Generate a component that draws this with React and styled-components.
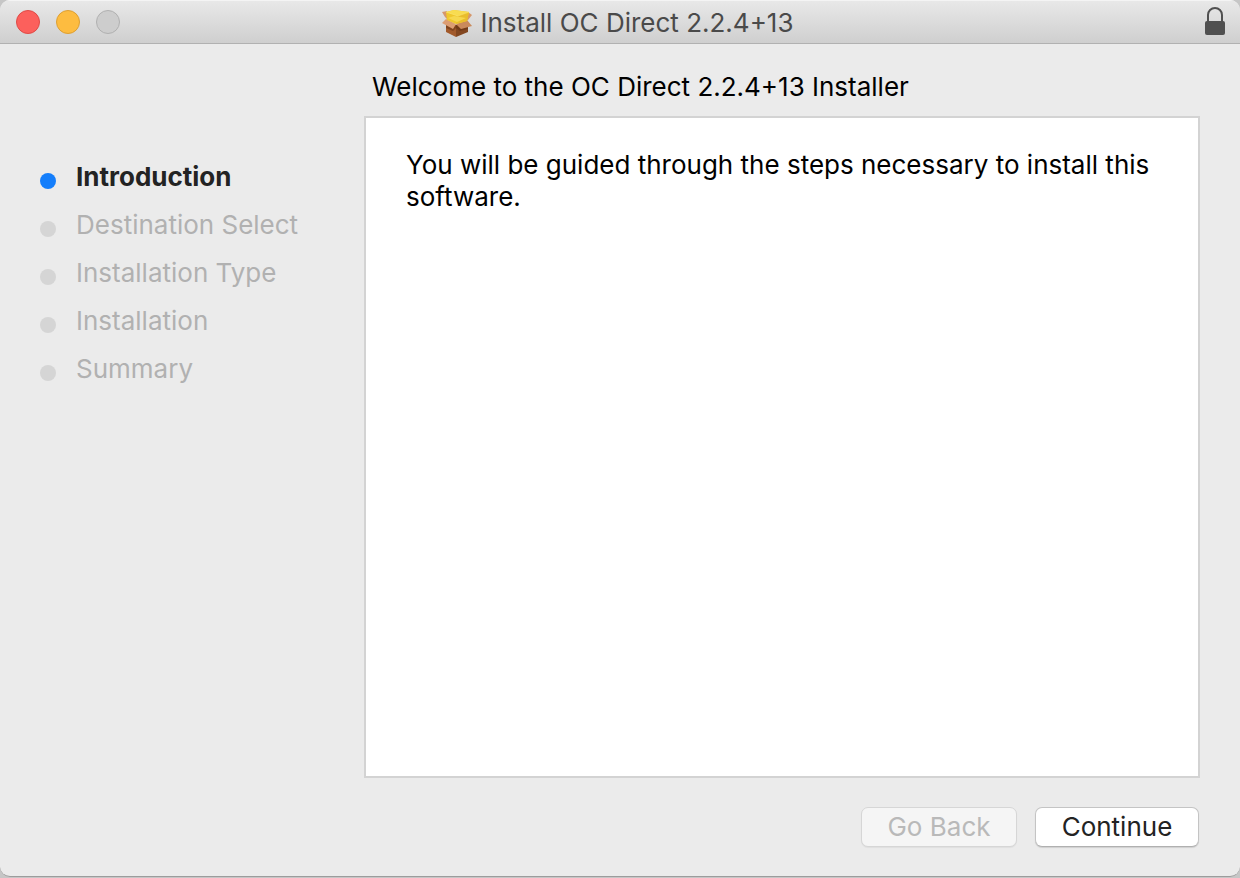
import React, { useState } from 'react';
import styled, { createGlobalStyle } from 'styled-components';

const GlobalStyle = createGlobalStyle`
  * {
    box-sizing: border-box;
  }

  body {
    margin: 0;
    background: #c6c6c6;
    font-family: Inter, 'Liberation Sans', sans-serif;
    font-size: 26px;
    line-height: 32px;
    color: #000;
  }
`;

const Window = styled.div`
  display: flex;
  flex-direction: column;
  min-height: calc(100vh - 1px);
  background: #ebebeb;
  border-bottom: 1px solid #9c9c9c;
  border-radius: 10px;
  overflow: hidden;
`;

const TitleBar = styled.header`
  display: grid;
  grid-template-columns: 1fr auto 1fr;
  align-items: center;
  height: 44px;
  padding: 0 14px 0 16px;
  background: linear-gradient(#e8e8e8, #cfcfcf);
  border-top: 1px solid #f4f4f4;
  border-bottom: 1px solid #b1b1b1;
`;

const WindowControls = styled.div`
  display: flex;
  gap: 16px;
`;

const ControlButton = styled.button`
  width: 24px;
  height: 24px;
  padding: 0;
  border: 1px solid ${(props) => props.$border};
  border-radius: 50%;
  background: ${(props) => props.$color};
`;

const Title = styled.h1`
  display: flex;
  align-items: center;
  gap: 8px;
  margin: 0;
  padding: 2px 8px 0 0;
  font-size: 26px;
  font-weight: 400;
  color: #4a4a4a;
`;

const LockButton = styled.button`
  justify-self: end;
  display: flex;
  padding: 0;
  border: none;
  background: none;
`;

const Body = styled.div`
  flex: 1;
  display: grid;
  grid-template-columns: 324px 1fr;
  padding: 27px 40px 29px;
`;

const Steps = styled.ol`
  display: flex;
  flex-direction: column;
  gap: 16px;
  margin: 0;
  padding: 90px 0 0;
  list-style: none;
`;

const Step = styled.li`
  display: flex;
  align-items: center;
  gap: 20px;
  font-weight: ${(props) => (props.$active ? 700 : 400)};
  color: ${(props) => (props.$active ? '#232323' : '#b1b1b1')};

  &::before {
    content: '';
    width: 16px;
    height: 16px;
    margin-top: 8px;
    border-radius: 50%;
    background: ${(props) => (props.$active ? '#147efb' : '#d5d5d5')};
  }
`;

const Main = styled.main`
  display: flex;
  flex-direction: column;
`;

const Heading = styled.h2`
  margin: 0 0 13px;
  padding-left: 8px;
  font-size: 26px;
  font-weight: 400;
`;

const Panel = styled.section`
  flex: 1;
  padding: 31px 40px;
  background: #fff;
  border: 2px solid #d3d3d3;

  p {
    margin: 0;
  }
`;

const Footer = styled.footer`
  display: flex;
  justify-content: flex-end;
  gap: 18px;
  padding: 29px 1px 0 0;
`;

const Button = styled.button`
  min-width: ${(props) => (props.$primary ? '164px' : '156px')};
  height: 40px;
  padding: 0 16px;
  border: 1px solid #c4c4c4;
  border-bottom-color: #b0b0b0;
  border-radius: 7px;
  background: #fff;
  box-shadow: 0 1px 1px rgba(0, 0, 0, 0.12);
  font-family: inherit;
  font-size: 26px;
  line-height: 32px;
  color: #232323;

  &:disabled {
    border-color: #d6d6d6;
    background: #f5f5f5;
    box-shadow: 0 1px 1px rgba(0, 0, 0, 0.05);
    color: #b9b9b9;
  }
`;

const PackageIcon = () => (
  <svg width="32" height="30" viewBox="0 0 32 30" aria-hidden="true">
    <path d="M5 13 15 17v12L5 24Z" fill="#a25a2b" />
    <path d="M15 17 27 13v11l-12 5Z" fill="#834720" />
    <path d="M5 16 12 20l3-3 5 4 7-2v2l-8 2-4-3-3 3-7-3Z" fill="#5f2e10" opacity=".5" />
    <path d="m1 4 5-1v8l-2-2Z" fill="#d6976b" />
    <path d="m31 7-4-3-2 9 2-1Z" fill="#d6976b" />
    <path d="m5 11 10 5-3 5L1 15Z" fill="#dc9d72" />
    <path d="m15 16 11-4 5 6-11 3Z" fill="#ca8a5c" />
    <path d="m5 4 8-2 15 2-2 9-11 3-9-4Z" fill="#efc72c" />
    <path d="m5 4 8-2 15 2-11 4Z" fill="#f8dc50" />
    <path d="m17 8 11-4-2 9-11 3Z" fill="#e9bd2c" />
    <path d="m7 10 6-2 12 2-9 4Z" fill="#f6d84e" />
    <path d="m5 4 12 4 11-4" fill="none" stroke="#fbe675" strokeWidth=".6" />
  </svg>
);

const LockIcon = () => (
  <svg width="22" height="30" viewBox="0 0 22 30" aria-hidden="true">
    <path d="M4 14V8a7 7 0 0 1 14 0v6" fill="none" stroke="#505050" strokeWidth="2" />
    <rect x="1" y="14" width="20" height="14" rx="2" fill="#505050" />
  </svg>
);

const steps = ['Introduction', 'Destination Select', 'Installation Type', 'Installation', 'Summary'];

const App = () => {
  const [current, setCurrent] = useState(0);

  return (
    <>
      <GlobalStyle />
      <Window>
        <TitleBar>
          <WindowControls>
            <ControlButton type="button" aria-label="Close" $color="#fc605c" $border="#df4a46" />
            <ControlButton type="button" aria-label="Minimize" $color="#fdbc40" $border="#dd9f32" />
            <ControlButton type="button" aria-label="Zoom" $color="#cdcdcd" $border="#b0b0b0" disabled />
          </WindowControls>
          <Title>
            <PackageIcon />
            Install OC Direct 2.2.4+13
          </Title>
          <LockButton type="button" aria-label="Certificate">
            <LockIcon />
          </LockButton>
        </TitleBar>
        <Body>
          <Steps>
            {steps.map((step, index) => (
              <Step key={step} $active={index === current}>
                {step}
              </Step>
            ))}
          </Steps>
          <Main>
            <Heading>Welcome to the OC Direct 2.2.4+13 Installer</Heading>
            <Panel>
              <p>You will be guided through the steps necessary to install this software.</p>
            </Panel>
            <Footer>
              <Button type="button" disabled={current === 0} onClick={() => setCurrent(current - 1)}>
                Go Back
              </Button>
              <Button
                type="button"
                $primary
                onClick={() => setCurrent(Math.min(current + 1, steps.length - 1))}
              >
                Continue
              </Button>
            </Footer>
          </Main>
        </Body>
      </Window>
    </>
  );
};

export default App;
